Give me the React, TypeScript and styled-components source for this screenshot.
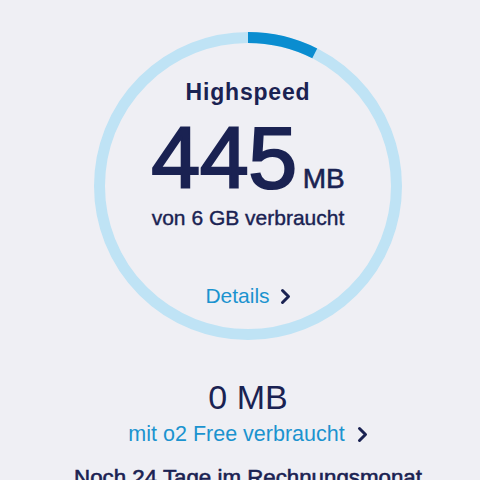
import React from "react";
import styled, { createGlobalStyle } from "styled-components";

const NAVY = "#1a2252";
const BLUE = "#1b93cf";

const GlobalStyle = createGlobalStyle`
  html, body {
    margin: 0;
    padding: 0;
    background: #efeff4;
    font-family: "Liberation Sans", Arial, sans-serif;
    color: ${NAVY};
  }
`;

const Page = styled.div`
  width: 480px;
  height: 480px;
  overflow: hidden;
  box-sizing: border-box;
  padding: 32px 0 0 16px;
  display: flex;
  flex-direction: column;
  align-items: center;
`;

const Ring = styled.div`
  position: relative;
  width: 308px;
  height: 308px;
  flex-shrink: 0;
`;

const RingSvg = styled.svg`
  position: absolute;
  inset: 0;
`;

const RingContent = styled.div`
  position: relative;
  box-sizing: border-box;
  height: 100%;
  padding-top: 46px;
  display: flex;
  flex-direction: column;
  align-items: center;
`;

const Title = styled.div`
  font-size: 23px;
  line-height: 28px;
  font-weight: 700;
  letter-spacing: 0.8px;
`;

const Amount = styled.div`
  margin-top: 8px;
  display: flex;
  align-items: baseline;
  height: 88px;
`;

const Number = styled.span`
  font-size: 88px;
  line-height: 88px;
  -webkit-text-stroke: 2.2px ${NAVY};
  letter-spacing: -0.5px;
`;

const Unit = styled.span`
  margin-left: 6px;
  font-size: 28px;
  line-height: 28px;
  -webkit-text-stroke: 0.6px ${NAVY};
`;

const Caption = styled.div<{ $gap?: number; $size?: number; $color?: string; $stroke?: number }>`
  margin-top: ${(p) => p.$gap ?? 0}px;
  font-size: ${(p) => p.$size ?? 21}px;
  line-height: 26px;
  color: ${(p) => p.$color ?? NAVY};
  -webkit-text-stroke: ${(p) => p.$stroke ?? 0}px ${NAVY};
  white-space: nowrap;
  display: flex;
  align-items: center;
  flex-shrink: 0;
`;

const Chevron = styled.svg<{ $gap: number }>`
  margin-left: ${(p) => p.$gap}px;
  width: 11px;
  height: 17px;
`;

const Free = styled.div`
  margin-top: 37px;
  font-size: 34px;
  line-height: 40px;
`;

const Arrow = ({ gap }: { gap: number }) => (
  <Chevron $gap={gap} viewBox="0 0 11 17">
    <path
      d="M2.5 2.5l6 6-6 6"
      fill="none"
      stroke={NAVY}
      strokeWidth="3"
      strokeLinecap="round"
      strokeLinejoin="round"
    />
  </Chevron>
);

export default function App() {
  const r = 148.5;
  const c = 2 * Math.PI * r;
  const used = 445 / 6000;

  return (
    <>
      <GlobalStyle />
      <Page>
        <Ring>
          <RingSvg width="308" height="308" viewBox="0 0 308 308">
            <circle cx="154" cy="154" r={r} fill="none" stroke="#bfe3f5" strokeWidth="11" />
            <circle
              cx="154"
              cy="154"
              r={r}
              fill="none"
              stroke="#0a8dd0"
              strokeWidth="11"
              strokeDasharray={`${c * used} ${c}`}
              transform="rotate(-90 154 154)"
            />
          </RingSvg>
          <RingContent>
            <Title>Highspeed</Title>
            <Amount>
              <Number>445</Number>
              <Unit>MB</Unit>
            </Amount>
            <Caption $gap={3} $stroke={0.4}>von 6 GB verbraucht</Caption>
            <Caption $gap={52} $color={BLUE}>
              Details
              <Arrow gap={10} />
            </Caption>
          </RingContent>
        </Ring>
        <Free>0 MB</Free>
        <Caption $gap={4} $size={21.5} $color={BLUE}>
          mit o2 Free verbraucht
          <Arrow gap={12} />
        </Caption>
        <Caption $gap={18} $size={22.3} $stroke={0.6}>
          Noch 24 Tage im Rechnungsmonat
        </Caption>
      </Page>
    </>
  );
}
